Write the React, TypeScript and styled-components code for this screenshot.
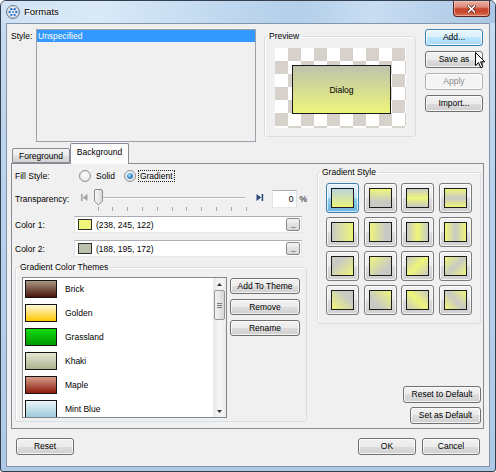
import React from "react";
import styled, { createGlobalStyle } from "styled-components";

const GlobalStyle = createGlobalStyle`
  html, body {
    margin: 0;
    padding: 0;
    background: #ffffff;
  }
  body {
    font-family: "Liberation Sans", Arial, sans-serif;
    font-size: 8.5px;
    color: #000;
  }
`;

const Y = "#eef57a";
const G = "#c9cac4";

const gradientStyles = [
  `linear-gradient(180deg, #b9d3de, ${Y})`,
  `linear-gradient(180deg, ${Y}, ${G} 70%)`,
  `linear-gradient(180deg, ${G}, ${Y} 50%, ${G})`,
  `linear-gradient(180deg, ${Y}, ${G} 50%, ${Y})`,
  `linear-gradient(90deg, ${G}, ${Y})`,
  `linear-gradient(90deg, ${Y}, ${G} 70%)`,
  `linear-gradient(90deg, ${G}, ${Y} 50%, ${G})`,
  `linear-gradient(90deg, ${Y}, ${G} 50%, ${Y})`,
  `linear-gradient(135deg, ${G} 30%, ${Y})`,
  `linear-gradient(135deg, ${Y}, ${G} 70%)`,
  `linear-gradient(135deg, ${G}, ${Y} 50%, ${G})`,
  `linear-gradient(135deg, ${Y}, ${G} 50%, ${Y})`,
  `linear-gradient(45deg, ${Y}, ${G} 70%)`,
  `linear-gradient(45deg, ${G} 30%, ${Y})`,
  `linear-gradient(45deg, ${G}, ${Y} 50%, ${G})`,
  `linear-gradient(45deg, ${Y}, ${G} 50%, ${Y})`,
];

const themes = [
  { name: "Brick", top: "#a99684", bottom: "#4a1408" },
  { name: "Golden", top: "#fff7dc", bottom: "#ffc800" },
  { name: "Grassland", top: "#14dc14", bottom: "#009800" },
  { name: "Khaki", top: "#e6e8d4", bottom: "#aeb28e" },
  { name: "Maple", top: "#d49e8a", bottom: "#8c1a0a" },
  { name: "Mint Blue", top: "#e8f5f7", bottom: "#9ecbd9" },
];

const Window = styled.div`
  position: relative;
  width: 496px;
  height: 472px;
  box-sizing: border-box;
  border: 1px solid #34404e;
  border-radius: 6px 6px 3px 3px;
  background: linear-gradient(180deg, #c9def2 0%, #bcd4ec 30%, #aec9e6 100%);
  display: flex;
  flex-direction: column;
  overflow: hidden;
`;

const TitleBar = styled.div`
  height: 22px;
  flex: none;
  display: flex;
  align-items: flex-start;
  background: linear-gradient(
    100deg,
    #cfe2f4 0%,
    #d9e9f7 20%,
    #c0d8ef 45%,
    #b3cfea 60%,
    #c8ddf2 75%,
    #aac6e4 100%
  );
`;

const TitleIcon = styled.svg`
  margin: 4px 0 0 5px;
  flex: none;
`;

const TitleText = styled.span`
  margin: 5px 0 0 4px;
  font-size: 9.5px;
  line-height: 12px;
  color: #000;
  text-shadow: 0 0 4px #ffffff, 0 0 2px #ffffff;
`;

const CloseButton = styled.div`
  margin-left: auto;
  margin-right: 5px;
  width: 37px;
  height: 16px;
  box-sizing: border-box;
  border: 1px solid #5c261c;
  border-top: none;
  border-radius: 0 0 4px 4px;
  background: linear-gradient(
    180deg,
    #e9ada0 0%,
    #dc8c7a 40%,
    #c7452e 52%,
    #c94a32 75%,
    #dd7a5c 100%
  );
  box-shadow: inset 0 0 0 1px rgba(255, 210, 200, 0.5);
  display: flex;
  align-items: center;
  justify-content: center;
`;

const Client = styled.div`
  flex: 1;
  margin: 0 5px 4px 5px;
  border: 1px solid #8196ad;
  background: #f0f0f0;
  display: flex;
  flex-direction: column;
`;

const TopRow = styled.div`
  margin-top: 5px;
  height: 113px;
  display: flex;
  align-items: flex-start;
`;

const StyleLabel = styled.div`
  width: 29px;
  box-sizing: border-box;
  padding-left: 4px;
  margin-top: 1px;
  line-height: 13px;
`;

const StyleList = styled.div`
  width: 220px;
  height: 113px;
  box-sizing: border-box;
  border: 1px solid #9ca0a8;
  background: #f0f0f0;
`;

const SelectedRow = styled.div`
  height: 12px;
  line-height: 12px;
  padding-left: 1px;
  background: #3399ff;
  color: #ffffff;
`;

const GroupBox = styled.fieldset<{ $width: number; $height: number }>`
  margin: 0;
  padding: 0;
  min-width: 0;
  width: ${(p) => p.$width}px;
  height: ${(p) => p.$height}px;
  box-sizing: border-box;
  border: 1px solid #d5dfe5;
  border-radius: 3px;
  box-shadow: inset 1px 1px 0 #ffffff;
`;

const Legend = styled.legend`
  margin-left: 2px;
  padding: 0 2px;
  line-height: 11px;
  color: #000;
`;

const PreviewBox = styled(GroupBox)`
  margin: 2px 0 0 8px;
`;

const Checker = styled.div`
  margin: 6px 0 0 10px;
  width: 131px;
  height: 80px;
  box-sizing: border-box;
  padding: 17px 0 0 17px;
  background: repeating-conic-gradient(#d6d2cb 0 25%, #ffffff 0 50%) 0 0 /
    26px 26px;
`;

const DialogShape = styled.div`
  width: 99px;
  height: 49px;
  box-sizing: border-box;
  border: 1px solid #1a1a1a;
  background: linear-gradient(180deg, #bcc3ab, #eef57a);
  display: flex;
  align-items: center;
  justify-content: center;
`;

const SideButtons = styled.div`
  margin-left: 9px;
  width: 58px;
  display: flex;
  flex-direction: column;
  gap: 5px;
`;

type ButtonVariant = "normal" | "hover" | "disabled";

const Button = styled.div<{
  $variant?: ButtonVariant;
  $width?: number;
  $height?: number;
}>`
  width: ${(p) => (p.$width ? `${p.$width}px` : "100%")};
  height: ${(p) => p.$height ?? 17}px;
  box-sizing: border-box;
  flex: none;
  border: 1px solid
    ${(p) =>
      p.$variant === "hover"
        ? "#3c7fb1"
        : p.$variant === "disabled"
        ? "#adb2b5"
        : "#707070"};
  border-radius: 3px;
  background: ${(p) =>
    p.$variant === "hover"
      ? "linear-gradient(180deg, #eaf6fd 0%, #d9f0fc 50%, #bee6fd 50%, #a7d9f5 100%)"
      : p.$variant === "disabled"
      ? "#f4f4f4"
      : "linear-gradient(180deg, #f2f2f2 0%, #ebebeb 50%, #dddddd 50%, #cfcfcf 100%)"};
  box-shadow: inset 0 0 0 1px rgba(255, 255, 255, 0.75);
  color: ${(p) => (p.$variant === "disabled" ? "#8c8c8c" : "#000")};
  display: flex;
  align-items: center;
  justify-content: center;
  line-height: 1;
`;

const TabArea = styled.div`
  margin: 1px 5px 0 4px;
  display: flex;
  flex-direction: column;
`;

const TabStrip = styled.div`
  height: 20px;
  padding-left: 1px;
  display: flex;
  align-items: flex-end;
`;

const Tab = styled.div<{ $active?: boolean }>`
  position: relative;
  z-index: ${(p) => (p.$active ? 1 : 0)};
  width: ${(p) => (p.$active ? 59 : 58)}px;
  height: ${(p) => (p.$active ? 21 : 15)}px;
  margin-bottom: ${(p) => (p.$active ? -1 : 0)}px;
  box-sizing: border-box;
  border: 1px solid #898c95;
  border-bottom: ${(p) => (p.$active ? "none" : "1px solid #898c95")};
  border-radius: 2px 2px 0 0;
  background: ${(p) =>
    p.$active
      ? "#fcfcfc"
      : "linear-gradient(180deg, #f3f3f3 0%, #ebebeb 50%, #dddddd 50%, #d5d5d5 100%)"};
  display: flex;
  justify-content: center;
  padding-top: ${(p) => (p.$active ? 3 : 2)}px;
  line-height: 11px;
`;

const Panel = styled.div`
  height: 266px;
  box-sizing: border-box;
  border: 1px solid #898c95;
  background: #f0f0f0;
  display: flex;
  padding: 4px 2px 4px 3px;
`;

const LeftColumn = styled.div`
  width: 292px;
  display: flex;
  flex-direction: column;
`;

const FormRow = styled.div<{ $height: number; $top: number }>`
  height: ${(p) => p.$height}px;
  margin-top: ${(p) => p.$top}px;
  display: flex;
  align-items: center;
`;

const RowLabel = styled.div`
  width: 59px;
  flex: none;
`;

const RadioCircle = styled.span<{ $checked?: boolean; $gap: number }>`
  width: 12px;
  height: 12px;
  margin-left: ${(p) => p.$gap}px;
  box-sizing: border-box;
  border-radius: 50%;
  border: 1px solid #8e8f8f;
  background: radial-gradient(circle at 50% 40%, #ffffff 0%, #e2e2e2 80%);
  display: flex;
  align-items: center;
  justify-content: center;
  &::after {
    content: "";
    display: ${(p) => (p.$checked ? "block" : "none")};
    width: 6px;
    height: 6px;
    border-radius: 50%;
    background: radial-gradient(
      circle at 40% 35%,
      #a6dcf8 0%,
      #3f8fce 50%,
      #1b4f86 100%
    );
  }
`;

const RadioText = styled.span<{ $focused?: boolean }>`
  margin-left: ${(p) => (p.$focused ? 2 : 3)}px;
  padding: 0 1px;
  line-height: 10px;
  border: 1px dotted ${(p) => (p.$focused ? "#222" : "transparent")};
`;

const SliderSvg = styled.svg`
  margin-left: 4px;
  flex: none;
`;

const NumberField = styled.div`
  margin-left: 4px;
  width: 28px;
  height: 18px;
  box-sizing: border-box;
  border: 1px solid;
  border-color: #abadb3 #dbdfe6 #e3e9ef #e2e3ea;
  background: #ffffff;
  display: flex;
  align-items: center;
  justify-content: flex-end;
  padding-right: 3px;
`;

const Percent = styled.span`
  margin-left: 2px;
`;

const ColorField = styled.div`
  width: 228px;
  height: 17px;
  box-sizing: border-box;
  border: 1px solid;
  border-color: #abadb3 #dbdfe6 #e3e9ef #e2e3ea;
  background: #ffffff;
  display: flex;
  align-items: center;
`;

const ColorSwatch = styled.span<{ $color: string }>`
  width: 14px;
  height: 11px;
  margin-left: 3px;
  box-sizing: border-box;
  border: 1px solid #303030;
  background: ${(p) => p.$color};
`;

const ColorText = styled.span`
  margin-left: 4px;
`;

const DotsButton = styled.span`
  margin-left: auto;
  margin-right: 1px;
  width: 14px;
  height: 13px;
  box-sizing: border-box;
  border: 1px solid #8a8a8a;
  border-radius: 2px;
  background: linear-gradient(180deg, #f6f6f6, #e2e2e2 50%, #d6d6d6);
  display: flex;
  align-items: flex-end;
  justify-content: center;
  font-size: 7px;
  line-height: 9px;
  letter-spacing: -0.5px;
`;

const ThemesBox = styled(GroupBox)`
  margin-top: 5px;
`;

const ThemesBody = styled.div`
  display: flex;
  align-items: flex-start;
  padding: 4px 0 0 6px;
`;

const ThemeList = styled.div`
  width: 205px;
  height: 141px;
  box-sizing: border-box;
  border: 1px solid #828790;
  background: #ffffff;
  display: flex;
  overflow: hidden;
`;

const ThemeItems = styled.div`
  flex: 1;
  padding-top: 2px;
  overflow: hidden;
`;

const ThemeItem = styled.div`
  height: 24px;
  display: flex;
  align-items: flex-start;
`;

const ThemeSwatch = styled.span<{ $top: string; $bottom: string }>`
  width: 32px;
  height: 18px;
  margin-left: 2px;
  flex: none;
  box-sizing: border-box;
  border: 1px solid #151515;
  background: linear-gradient(180deg, ${(p) => p.$top}, ${(p) => p.$bottom});
`;

const ThemeName = styled.span`
  margin-left: 8px;
  line-height: 18px;
`;

const ScrollTrack = styled.div`
  width: 13px;
  flex: none;
  display: flex;
  flex-direction: column;
  align-items: center;
  background: linear-gradient(90deg, #e6e6e6, #f5f5f5 45%, #f5f5f5 60%, #ebebeb);
`;

const ScrollArrow = styled.div`
  height: 12px;
  width: 100%;
  display: flex;
  align-items: center;
  justify-content: center;
`;

const ScrollThumb = styled.div`
  width: 11px;
  height: 30px;
  box-sizing: border-box;
  border: 1px solid #979797;
  border-radius: 2px;
  background: linear-gradient(90deg, #f3f3f3, #e6e6e6 50%, #d6d6d6);
  display: flex;
  align-items: center;
  justify-content: center;
`;

const ScrollSpacer = styled.div`
  flex: 1;
`;

const ThemeButtons = styled.div`
  margin: 1px 0 0 3px;
  width: 70px;
  display: flex;
  flex-direction: column;
  gap: 5px;
`;

const RightColumn = styled.div`
  width: 164px;
  margin: -1px 0 0 10px;
  display: flex;
  flex-direction: column;
  align-items: flex-end;
`;

const StyleGrid = styled.div`
  display: grid;
  grid-template-columns: repeat(4, 33px);
  grid-auto-rows: 30px;
  column-gap: 4.5px;
  row-gap: 4px;
  padding: 5px 0 0 8px;
`;

const StyleButton = styled.div<{ $selected?: boolean }>`
  box-sizing: border-box;
  border: 1px solid ${(p) => (p.$selected ? "#3c7fb1" : "#7a7a7a")};
  border-radius: 3px;
  background: ${(p) =>
    p.$selected
      ? "linear-gradient(180deg, #e5f4fc 0%, #c4e5f6 50%, #98d1ef 50%, #68b3db 100%)"
      : "linear-gradient(180deg, #f2f2f2 0%, #ebebeb 50%, #dddddd 50%, #cfcfcf 100%)"};
  box-shadow: inset 0 0 0 1px rgba(255, 255, 255, 0.7);
  display: flex;
  align-items: center;
  justify-content: center;
`;

const StyleSwatch = styled.span<{ $bg: string }>`
  width: 23px;
  height: 20px;
  box-sizing: border-box;
  border: 1px solid #1c1c1c;
  background: ${(p) => p.$bg};
`;

const DefaultButtons = styled.div`
  margin-top: auto;
  display: flex;
  flex-direction: column;
  align-items: flex-end;
  gap: 4px;
`;

const BottomRow = styled.div`
  margin-top: 9px;
  padding: 0 9px;
  display: flex;
  align-items: center;
  gap: 6px;
`;

const Spacer = styled.div`
  flex: 1;
`;

const Cursor = styled.svg`
  position: absolute;
  left: 474px;
  top: 51px;
`;

function FormatsIcon() {
  const dots = [0, 60, 120, 180, 240, 300].map((deg) => {
    const r = (deg * Math.PI) / 180;
    return { x: 7 + Math.cos(r) * 3.3, y: 7 + Math.sin(r) * 3.3 };
  });
  return (
    <TitleIcon width="14" height="14" viewBox="0 0 14 14">
      <defs>
        <radialGradient id="ring" cx="40%" cy="35%" r="70%">
          <stop offset="0%" stopColor="#ffffff" />
          <stop offset="100%" stopColor="#b4c2d0" />
        </radialGradient>
      </defs>
      <circle cx="7" cy="7" r="6.5" fill="url(#ring)" stroke="#6b7b8c" />
      <circle cx="7" cy="7" r="5" fill="#f6f9fc" stroke="#c4d0dc" strokeWidth="0.6" />
      {dots.map((d, i) => (
        <circle key={i} cx={d.x} cy={d.y} r="1.2" fill="#2f6fc4" />
      ))}
      <circle cx="7" cy="7" r="1" fill="#2f6fc4" />
    </TitleIcon>
  );
}

function CloseGlyph() {
  return (
    <svg width="9" height="8" viewBox="0 0 9 8">
      <path
        d="M1.5 1 L7.5 7 M7.5 1 L1.5 7"
        stroke="#5a2118"
        strokeWidth="3"
        strokeLinecap="square"
      />
      <path
        d="M1.5 1 L7.5 7 M7.5 1 L1.5 7"
        stroke="#ffffff"
        strokeWidth="1.6"
        strokeLinecap="square"
      />
    </svg>
  );
}

function Slider() {
  const ticks = Array.from({ length: 11 }, (_, i) => 19.5 + i * 14.8);
  return (
    <SliderSvg width="190" height="26" viewBox="0 0 190 26">
      <defs>
        <linearGradient id="thumb" x1="0" y1="0" x2="1" y2="0">
          <stop offset="0%" stopColor="#fafafa" />
          <stop offset="100%" stopColor="#d6d6d6" />
        </linearGradient>
      </defs>
      <rect x="3" y="8" width="1.6" height="7" fill="#a3a3a3" />
      <path d="M9.5 8 L4.8 11.5 L9.5 15 Z" fill="#a3a3a3" />
      <line x1="22" y1="11.5" x2="167" y2="11.5" stroke="#b4b4b4" />
      <line x1="22" y1="12.5" x2="167" y2="12.5" stroke="#ffffff" />
      {ticks.map((x, i) => (
        <line
          key={i}
          x1={Math.round(x) + 0.5}
          y1="21"
          x2={Math.round(x) + 0.5}
          y2="25"
          stroke="#a8a8a8"
        />
      ))}
      <path
        d="M16.5 5 Q16.5 3.5 18 3.5 H23 Q24.5 3.5 24.5 5 V15 L20.5 19 L16.5 15 Z"
        fill="url(#thumb)"
        stroke="#8c8c8c"
      />
      <path d="M178.5 8 L183.2 11.5 L178.5 15 Z" fill="#274a78" />
      <rect x="183.6" y="8" width="1.6" height="7" fill="#274a78" />
    </SliderSvg>
  );
}

function ScrollBar() {
  return (
    <ScrollTrack>
      <ScrollArrow>
        <svg width="5" height="3" viewBox="0 0 5 3">
          <path d="M0 3 L2.5 0 L5 3 Z" fill="#333" />
        </svg>
      </ScrollArrow>
      <ScrollThumb>
        <svg width="5" height="5" viewBox="0 0 5 5">
          <path d="M0 0.5 H5 M0 2.5 H5 M0 4.5 H5" stroke="#7a7a7a" />
        </svg>
      </ScrollThumb>
      <ScrollSpacer />
      <ScrollArrow>
        <svg width="5" height="3" viewBox="0 0 5 3">
          <path d="M0 0 L2.5 3 L5 0 Z" fill="#333" />
        </svg>
      </ScrollArrow>
    </ScrollTrack>
  );
}

export default function App() {
  return (
    <>
      <GlobalStyle />
      <Window>
        <TitleBar>
          <FormatsIcon />
          <TitleText>Formats</TitleText>
          <CloseButton>
            <CloseGlyph />
          </CloseButton>
        </TitleBar>
        <Client>
          <TopRow>
            <StyleLabel>Style:</StyleLabel>
            <StyleList>
              <SelectedRow>Unspecified</SelectedRow>
            </StyleList>
            <PreviewBox $width={152} $height={106}>
              <Legend>Preview</Legend>
              <Checker>
                <DialogShape>Dialog</DialogShape>
              </Checker>
            </PreviewBox>
            <SideButtons>
              <Button $variant="hover">Add...</Button>
              <Button>Save as</Button>
              <Button $variant="disabled">Apply</Button>
              <Button>Import...</Button>
            </SideButtons>
          </TopRow>
          <TabArea>
            <TabStrip>
              <Tab>Foreground</Tab>
              <Tab $active>Background</Tab>
            </TabStrip>
            <Panel>
              <LeftColumn>
                <FormRow $height={16} $top={0}>
                  <RowLabel>Fill Style:</RowLabel>
                  <RadioCircle $gap={5} />
                  <RadioText>Solid</RadioText>
                  <RadioCircle $gap={7} $checked />
                  <RadioText $focused>Gradient</RadioText>
                </FormRow>
                <FormRow $height={26} $top={2}>
                  <RowLabel>Transparency:</RowLabel>
                  <Slider />
                  <NumberField>0</NumberField>
                  <Percent>%</Percent>
                </FormRow>
                <FormRow $height={17} $top={4}>
                  <RowLabel>Color 1:</RowLabel>
                  <ColorField>
                    <ColorSwatch $color="rgb(238, 245, 122)" />
                    <ColorText>(238, 245, 122)</ColorText>
                    <DotsButton>...</DotsButton>
                  </ColorField>
                </FormRow>
                <FormRow $height={17} $top={7}>
                  <RowLabel>Color 2:</RowLabel>
                  <ColorField>
                    <ColorSwatch $color="rgb(188, 195, 172)" />
                    <ColorText>(188, 195, 172)</ColorText>
                    <DotsButton>...</DotsButton>
                  </ColorField>
                </FormRow>
                <ThemesBox $width={292} $height={160}>
                  <Legend>Gradient Color Themes</Legend>
                  <ThemesBody>
                    <ThemeList>
                      <ThemeItems>
                        {themes.map((t) => (
                          <ThemeItem key={t.name}>
                            <ThemeSwatch $top={t.top} $bottom={t.bottom} />
                            <ThemeName>{t.name}</ThemeName>
                          </ThemeItem>
                        ))}
                      </ThemeItems>
                      <ScrollBar />
                    </ThemeList>
                    <ThemeButtons>
                      <Button $height={16}>Add To Theme</Button>
                      <Button $height={16}>Remove</Button>
                      <Button $height={16}>Rename</Button>
                    </ThemeButtons>
                  </ThemesBody>
                </ThemesBox>
              </LeftColumn>
              <RightColumn>
                <GroupBox $width={164} $height={157}>
                  <Legend>Gradient Style</Legend>
                  <StyleGrid>
                    {gradientStyles.map((bg, i) => (
                      <StyleButton key={i} $selected={i === 0}>
                        <StyleSwatch $bg={bg} />
                      </StyleButton>
                    ))}
                  </StyleGrid>
                </GroupBox>
                <DefaultButtons>
                  <Button $width={78}>Reset to Default</Button>
                  <Button $width={71}>Set as Default</Button>
                </DefaultButtons>
              </RightColumn>
            </Panel>
          </TabArea>
          <BottomRow>
            <Button $width={58}>Reset</Button>
            <Spacer />
            <Button $width={58}>OK</Button>
            <Button $width={58}>Cancel</Button>
          </BottomRow>
        </Client>
        <Cursor width="12" height="17" viewBox="0 0 12 17">
          <path
            d="M0.5 0.5 V13.5 L3.5 10.5 L5.8 15.8 L7.8 14.9 L5.6 9.8 H9.8 Z"
            fill="#ffffff"
            stroke="#000000"
            strokeLinejoin="round"
          />
        </Cursor>
      </Window>
    </>
  );
}
